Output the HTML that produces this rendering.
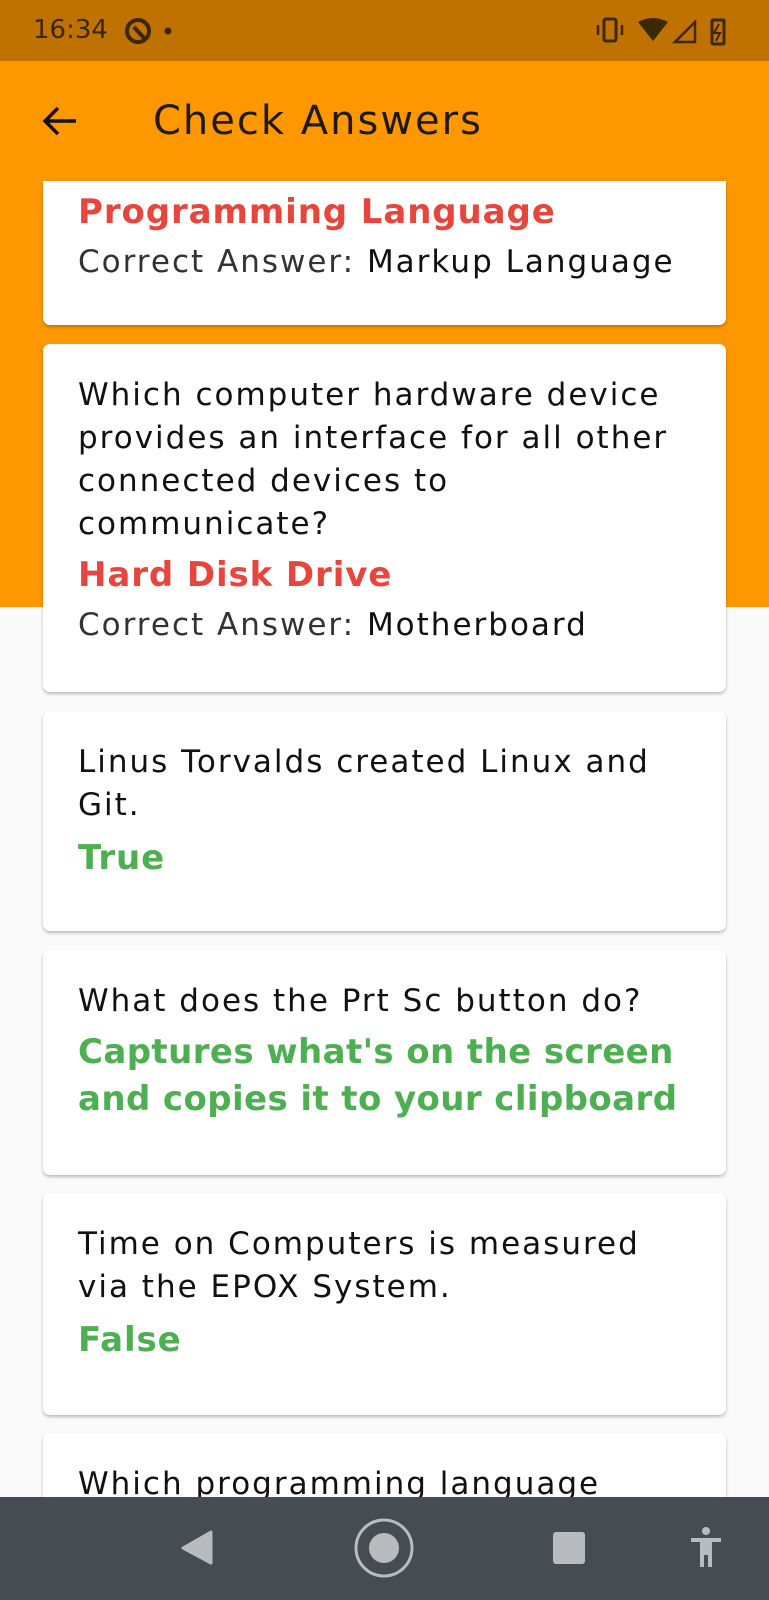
<!DOCTYPE html>
<html><head><meta charset="utf-8"><style>
*{margin:0;padding:0;box-sizing:border-box}
html,body{width:769px;height:1600px;overflow:hidden}
body{background:#fafafa;font-family:"DejaVu Sans","Liberation Sans",sans-serif;position:relative}
.status{position:absolute;top:0;left:0;width:769px;height:61px;background:#bf7200;color:#3a2800;font-size:26px}
.orange{position:absolute;top:61px;left:0;width:769px;height:546px;background:#ff9800}
.title{position:absolute;top:98px;left:153px;font-size:40px;color:#1f1a10;letter-spacing:2px}
.card{position:absolute;left:43px;width:683px;background:#fff;border-radius:7px;box-shadow:0 2px 3px rgba(0,0,0,0.25);padding:0 35px;overflow:hidden}
.q{font-size:31px;line-height:43px;color:#111;letter-spacing:2px}
.a{font-size:34px;font-weight:bold;line-height:47px;letter-spacing:0.9px}
.r{color:#e8453c}.g{color:#4caf50}
.c{font-size:31px;line-height:43px;color:#333;letter-spacing:2px}
.c b{font-weight:normal;color:#111}
.nav{position:absolute;top:1497px;left:0;width:769px;height:103px;background:#454d53}
</style></head><body>
<div class="status">
<span style="position:absolute;left:33px;top:15px">16:34</span>
<svg style="position:absolute;left:124px;top:16px" width="60" height="30"><circle cx="14" cy="15" r="11" fill="none" stroke="#3a2800" stroke-width="4"/><path d="M10 11 L20 22" stroke="#3a2800" stroke-width="4"/><circle cx="44" cy="15" r="3.5" fill="#3a2800"/></svg>
<svg style="position:absolute;left:595px;top:14px" width="150" height="34"><rect x="9" y="5" width="12" height="22" rx="2" fill="none" stroke="#3a2800" stroke-width="3"/><path d="M3 11v10M27 11v10" stroke="#3a2800" stroke-width="2.5"/><path d="M43 8 Q58 0 73 8 L58 27Z" fill="#3a2800"/><path d="M80 28 L100 8 L100 28Z" fill="none" stroke="#3a2800" stroke-width="2.5"/><rect x="117" y="6" width="12" height="24" rx="1" fill="none" stroke="#3a2800" stroke-width="3"/><path d="M124 10 L119 19 H125 L121 27" stroke="#3a2800" stroke-width="2" fill="none"/></svg>
</div>
<div class="orange"></div>
<svg style="position:absolute;left:40px;top:104px" width="40" height="34"><path d="M36 17H5M18 4L5 17L18 30" stroke="#111" stroke-width="3.5" fill="none"/></svg>
<div class="title">Check Answers</div>

<div class="card" style="top:181px;height:144px;border-radius:0 0 7px 7px"><div class="a r" style="margin-top:8px">Programming Language</div><div class="c" style="margin-top:5px">Correct Answer: <b>Markup Language</b></div></div>

<div class="card" style="top:344px;height:348px;padding-top:30px"><div class="q">Which computer hardware device provides an interface for all other connected devices to communicate?</div><div class="a r" style="margin-top:6px">Hard Disk Drive</div><div class="c" style="margin-top:5px">Correct Answer: <b>Motherboard</b></div></div>

<div class="card" style="top:711px;height:220px;padding-top:30px"><div class="q">Linus Torvalds created Linux and<br>Git.</div><div class="a g" style="margin-top:8px">True</div></div>

<div class="card" style="top:950px;height:225px;padding-top:30px"><div class="q">What does the Prt Sc button do?</div><div class="a g" style="margin-top:6px;white-space:nowrap;letter-spacing:0.4px">Captures what's on the screen<br>and copies it to your clipboard</div></div>

<div class="card" style="top:1193px;height:222px;padding-top:30px"><div class="q">Time on Computers is measured<br>via the EPOX System.</div><div class="a g" style="margin-top:8px">False</div></div>

<div class="card" style="top:1433px;height:120px;padding-top:30px"><div class="q">Which programming language</div></div>

<div class="nav">
<svg width="769" height="103"><path d="M211 35 L211 66 L183 51Z" fill="#b8bcbf" stroke="#b8bcbf" stroke-width="3" stroke-linejoin="round"/><circle cx="384" cy="51" r="28" fill="none" stroke="#b8bcbf" stroke-width="3"/><circle cx="384" cy="51" r="15" fill="#b8bcbf"/><rect x="553" y="35" width="32" height="32" rx="3" fill="#b8bcbf"/><circle cx="706" cy="34" r="4" fill="#b8bcbf"/><path d="M691 43H721" stroke="#b8bcbf" stroke-width="4"/><path d="M702 43V70M710 43V70" stroke="#b8bcbf" stroke-width="4"/><rect x="700" y="42" width="12" height="16" fill="#b8bcbf"/></svg>
</div>
</body></html>
